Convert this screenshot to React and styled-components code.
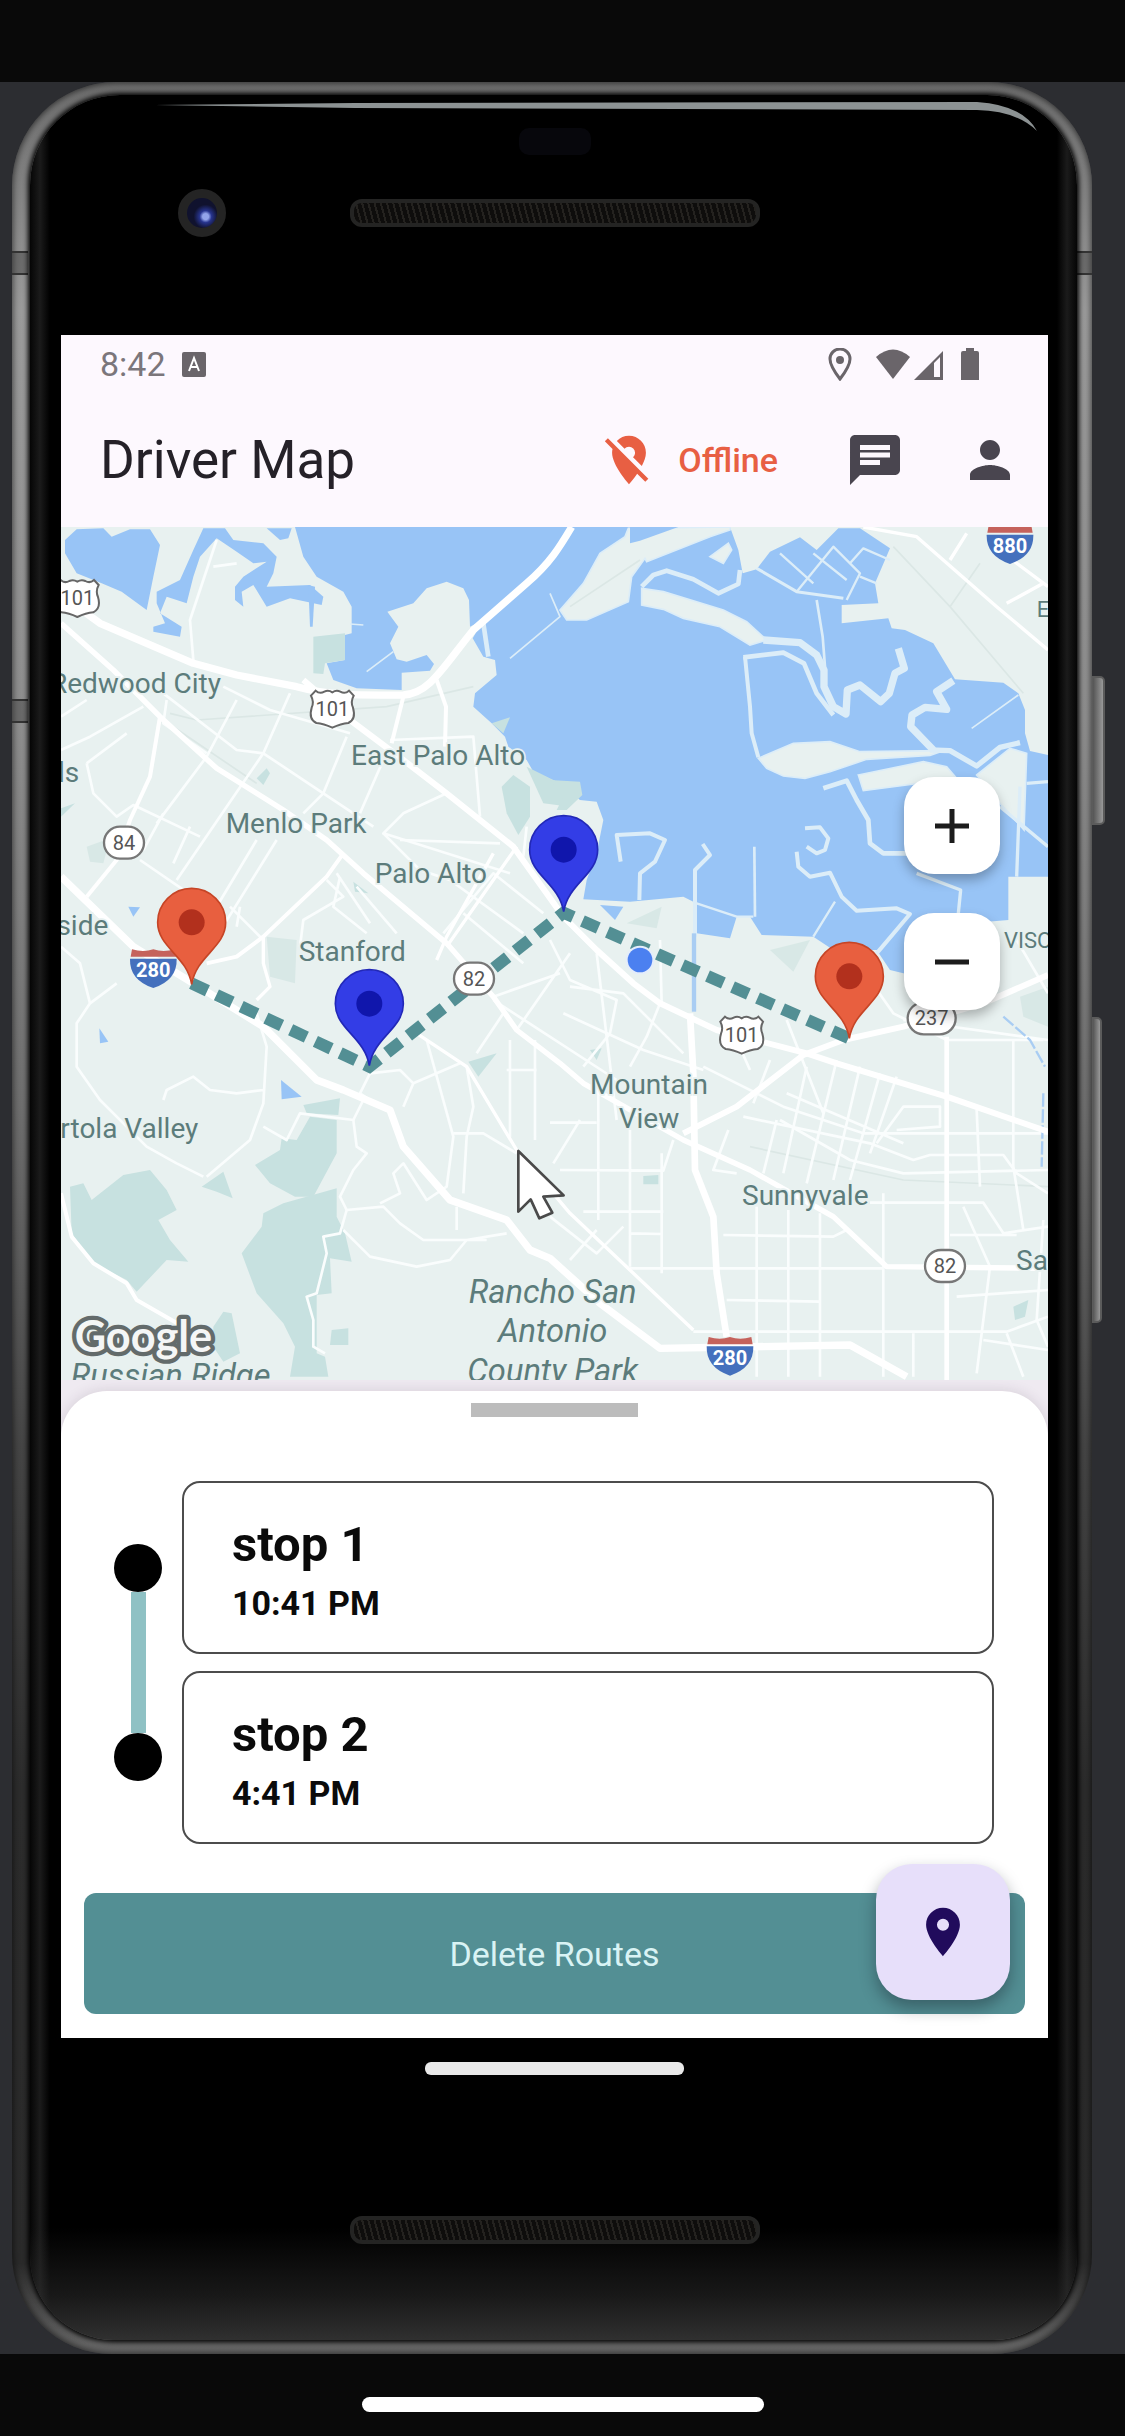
import React from "react";
import styled, { createGlobalStyle } from "styled-components";
import { MdChat, MdLocationOff, MdLocationOn, MdPerson } from "react-icons/md";

const color = {
  letterbox: "#090909",
  desk: "#2c2d31",
  surface: "#fdf8fe",
  ink: "#252128",
  muted: "#6a656a",
  icon: "#49454f",
  offline: "#e85f43",
  teal: "#538f94",
  tealLight: "#8fc1c4",
  water: "#98c4f6",
  land: "#e8f1f0",
  marsh: "#dcedf8",
  park: "#c7e1e0",
  parkLight: "#d8e8e6",
  label: "#5c7c7b",
};

const GlobalStyle = createGlobalStyle`
  *, *::before, *::after { box-sizing: border-box; }
  body {
    margin: 0;
    background: ${color.letterbox};
    font-family: Roboto, "Liberation Sans", sans-serif;
  }
  button { font: inherit; border: 0; padding: 0; cursor: pointer; }
`;

const Page = styled.div`
  min-height: 100vh;
  display: grid;
  grid-template-rows: 82px 1fr 82px;
`;

const Desk = styled.div`
  grid-row: 2;
  background: ${color.desk};
  padding: 0 33px 0 12px;
`;

const HomeBar = styled.footer`
  grid-row: 3;
  display: flex;
  justify-content: center;
  align-items: center;
  padding-top: 18px;

  span {
    width: 402px;
    height: 15px;
    border-radius: 8px;
    background: #fff;
  }
`;

const PhoneFrame = styled.div`
  position: relative;
  display: flex;
  padding: 13px 15px 14px 18px;
  border-radius: 104px 104px 100px 100px;
  background: linear-gradient(#6d6d6d, #9b9b9b 10%, #8e8e8e 28%, #6e6e6e 45%, #454545 60%, #2c2c2c 75%, #2a2a2a 96%, #6a6a6a);
  box-shadow: inset 0 0 6px 1px rgba(0, 0, 0, 0.6);
`;

const SideKey = styled.span`
  position: absolute;
  left: 100%;
  top: ${(p) => p.$top}px;
  width: ${(p) => p.$width}px;
  height: ${(p) => p.$height}px;
  border: 2px solid #5b5b5b;
  border-left-width: 1px;
  border-radius: 0 5px 5px 0;
  background: linear-gradient(90deg, #555, #999);
`;

const Seam = styled.span`
  position: absolute;
  ${(p) => p.$side}: 0;
  top: ${(p) => p.$top}px;
  width: 16px;
  height: 24px;
  border: solid #333;
  border-width: 2px 0;
  background: rgba(50, 50, 50, 0.4);
`;

const Glass = styled.div`
  position: relative;
  flex: 1;
  min-width: 0;
  display: flex;
  flex-direction: column;
  padding: 0 29px 0 31px;
  border-radius: 90px 90px 84px 84px;
  background:
    linear-gradient(transparent 95%, rgba(48, 48, 48, 0.5) 98%, #303030),
    linear-gradient(90deg, #050505, #1b1b1b 10px, #000 20px, #000 calc(100% - 20px), #1b1b1b calc(100% - 10px), #050505);
  box-shadow: 0 0 5px 2px #000;
`;

const Shine = styled.svg`
  position: absolute;
  top: 4px;
  right: 38px;
  width: 884px;
  height: 34px;
`;

const Forehead = styled.div`
  height: 240px;
  display: grid;
  grid-template-columns: 1fr auto 1fr;
  grid-template-rows: 27px 48px;
  row-gap: 34px;
  padding-top: 33px;
  align-content: start;
  align-items: center;
`;

const Sensor = styled.span`
  grid-column: 2;
  justify-self: center;
  width: 72px;
  height: 27px;
  border-radius: 10px;
  background: #07070c;
`;

const Camera = styled.span`
  grid-row: 2;
  grid-column: 1;
  justify-self: start;
  margin-left: 117px;
  width: 48px;
  height: 48px;
  border: 9px solid #242424;
  border-radius: 50%;
  background: radial-gradient(circle at 62% 62%, #93a4ea 0 3px, #27348e 6px, #10122e 12px);
`;

const Grille = styled.span`
  grid-row: 2;
  grid-column: 2;
  display: block;
  width: 410px;
  height: 28px;
  border: 4px solid #242423;
  border-radius: 12px;
  background: repeating-linear-gradient(75deg, #24221f 0 2px, #0e0d0c 2px 6px);
`;

const Chin = styled.div`
  height: 302px;
  display: flex;
  flex-direction: column;
  align-items: center;
  padding-top: 24px;
  gap: 141px;
`;

const NavHandle = styled.span`
  width: 259px;
  height: 13px;
  border-radius: 6px;
  background: #e9e9e9;
`;

const Screen = styled.main`
  position: relative;
  flex: 1;
  display: flex;
  flex-direction: column;
  background: ${color.surface};
  overflow: hidden;
`;

const StatusBar = styled.div`
  height: 58px;
  display: flex;
  align-items: center;
  gap: 16px;
  padding: 0 68px 0 39px;
  color: ${color.muted};
`;

const Clock = styled.time`
  font-size: 34px;
  line-height: 40px;
  color: #7b767b;
`;

const StatusIcons = styled.div`
  display: flex;
  margin-left: auto;

  svg { display: block; }
`;

const AppBar = styled.header`
  height: 134px;
  display: flex;
  align-items: center;
  gap: 55px;
  padding: 0 28px 0 39px;
`;

const Title = styled.h1`
  flex: 1;
  margin: 0;
  font-size: 53px;
  line-height: 60px;
  font-weight: 400;
  color: ${color.ink};
`;

const BarButton = styled.button`
  display: flex;
  align-items: center;
  gap: 20px;
  background: none;
  color: ${(p) => (p.$alert ? color.offline : color.icon)};
  font-size: 34px;
  line-height: 40px;
  font-weight: 500;
  padding-right: ${(p) => (p.$alert ? 12 : 0)}px;
`;

const MapPane = styled.section`
  position: relative;
  height: 853px;

  > svg {
    display: block;
    width: 100%;
    height: 100%;
  }
`;

const ZoomControls = styled.div`
  position: absolute;
  top: 250px;
  right: 48px;
  display: flex;
  flex-direction: column;
  gap: 39px;
`;

const ZoomButton = styled.button`
  display: grid;
  place-items: center;
  width: 96px;
  height: 97px;
  border-radius: 30px;
  background: #fff;
  box-shadow: 0 6px 12px rgba(0, 0, 0, 0.28);
`;

const SheetArea = styled.section`
  flex: 1;
  padding-top: 11px;
  background: #efeaf1;
`;

const Sheet = styled.div`
  display: flex;
  flex-direction: column;
  height: 100%;
  padding: 12px 23px 24px;
  border-radius: 46px 46px 0 0;
  background: #fff;
  box-shadow: 0 0 14px rgba(60, 40, 70, 0.15);
`;

const DragHandle = styled.span`
  align-self: center;
  width: 167px;
  height: 14px;
  background: #bcbcbc;
`;

const Route = styled.div`
  display: flex;
  gap: 20px;
  padding: 64px 31px 49px 30px;
`;

const Rail = styled.div`
  display: flex;
  flex-direction: column;
  align-items: center;
  width: 48px;
  padding: 63px 0;
`;

const Dot = styled.span`
  width: 48px;
  height: 48px;
  border-radius: 50%;
  background: #000;
`;

const Connector = styled.span`
  flex: 1;
  width: 15px;
  background: ${color.tealLight};
`;

const StopList = styled.ol`
  flex: 1;
  display: grid;
  gap: 17px;
  margin: 0;
  padding: 0;
  list-style: none;
`;

const StopCard = styled.li`
  height: 173px;
  padding: 33px 48px;
  border: 2px solid #4c4c4c;
  border-radius: 18px;
  color: #0b0b0b;
  font-weight: 700;
`;

const StopName = styled.h2`
  margin: 0;
  font-size: 49px;
  line-height: 58px;
`;

const StopTime = styled.p`
  margin: 0;
  padding-top: 9px;
  font-size: 34px;
  line-height: 40px;
`;

const DeleteButton = styled.button`
  height: 121px;
  border-radius: 12px;
  background: ${color.teal};
  color: #d9f3f4;
  font-size: 34px;
`;

const LocateButton = styled.button`
  position: absolute;
  right: 38px;
  bottom: 38px;
  display: grid;
  place-items: center;
  width: 134px;
  height: 136px;
  border-radius: 36px;
  background: #e7dffa;
  color: #210b5c;
  box-shadow: 0 8px 16px rgba(20, 30, 40, 0.4);
`;

const MapLabel = styled.text`
  font-family: Roboto, "Liberation Sans", sans-serif;
  font-size: ${(p) => p.$size || 84}px;
  font-style: ${(p) => (p.$italic ? "italic" : "normal")};
  fill: ${color.label};
  stroke: ${color.land};
  stroke-width: 10px;
  paint-order: stroke;
  text-anchor: ${(p) => p.$anchor || "start"};
`;

const ShieldText = styled.text`
  font-family: Roboto, "Liberation Sans", sans-serif;
  font-size: 60px;
  font-weight: ${(p) => (p.$light ? 700 : 400)};
  fill: ${(p) => (p.$light ? "#fff" : "#555")};
  text-anchor: middle;
`;

const Watermark = styled.text`
  font-family: Lato, "Liberation Sans", sans-serif;
  font-size: 130px;
  font-weight: 700;
  fill: #f4f6f6;
  stroke: #636b6b;
  stroke-width: 26px;
  stroke-linejoin: round;
  paint-order: stroke;
`;

const WATER = [
  "M735 21 L760 110 L800 170 L880 215 L905 260 L905 340 L885 345 L885 420 L830 430 L850 480 L920 505 L1055 510 L1055 458 L1140 452 L1152 432 L1130 405 L1070 425 L1040 418 L1020 370 L1045 320 L1012 275 L1090 250 L1130 205 L1190 185 L1240 205 L1257 240 L1260 320 L1300 300 L1268 355 L1300 410 L1335 420 L1340 465 L1275 520 L1270 560 L1325 610 L1365 650 L1375 680 L1430 720 L1450 755 L1530 790 L1590 840 L1640 845 L1660 900 L1640 1000 L1610 1080 L1600 1138 L1740 1145 L1900 1130 L1930 1145 L1940 1240 L2040 1255 L2060 1190 L2100 1190 L2135 1245 L2290 1250 L2350 1290 L2480 1290 L2520 1350 L2560 1360 L2620 1370 L2720 1330 L2760 1210 L2875 1200 L2875 1070 L2994 1070 L2994 705 L2940 693 L2925 640 L2925 570 L2905 520 L2860 488 L2715 478 L2650 370 L2565 330 L2525 325 L2515 295 L2375 310 L2375 255 L2485 250 L2475 190 L2520 85 L2430 25 L2365 25 L2300 90 L2250 52 L2160 95 L2120 148 L2078 160 L2065 90 L2040 21 Z",
  "M45 60 L80 28 L160 25 L185 50 L240 28 L300 28 L330 75 L310 170 L290 270 L215 215 L155 190 L80 160 L45 100 Z",
  "M460 25 L525 25 L550 60 L640 70 L680 110 L670 160 L650 200 L780 195 L820 230 L815 255 L720 235 L650 260 L610 195 L575 215 L580 260 L555 240 L555 200 L580 170 L650 125 L610 130 L560 95 L500 55 L450 110 L430 170 L410 250 L350 230 L330 280 L395 320 L390 350 L310 335 L310 320 L345 310 L320 250 L320 215 L390 180 L430 90 Z",
  "M650 25 L725 25 L715 55 L690 60 Z",
  "M693 1680 L755 1730 L695 1738 Z",
  "M148 1525 L175 1565 L150 1570 Z",
  "M235 1160 L270 1162 L250 1190 Z",
  "M775 195 L795 200 L788 320 L780 320 Z",
  "M793 2085 L820 2098 L798 2115 Z",
];

const ISLANDS = [
  "M1735 25 L1725 50 L1650 100 L1600 190 L1530 270 L1550 300 L1610 300 L1735 245 L1745 170 L1785 115 L1790 125 L1980 50 L2040 30 L2040 21 Z",
  "M1775 205 L1840 215 L2020 270 L2090 305 L2150 360 L2100 375 L2010 320 L1900 295 L1840 268 L1775 255 Z",
  "M2125 715 L2230 670 L2340 665 L2430 695 L2680 692 L2640 706 L2450 718 L2340 755 L2265 775 L2200 768 L2150 745 Z",
  "M2780 765 L2880 685 L2930 700 L2922 930 L2850 850 Z",
  "M2425 765 L2620 725 L2690 740 L2720 775 L2440 812 Z",
  "M1980 110 L2035 70 L2045 90 L2020 130 Z",
];

const MARSH = [
  [14, "M1775 200 L1810 165 L1850 152 L1930 178 L2005 220 L2065 192 L2070 150"],
  [22, "M2140 360 L2250 368 L2300 405 L2322 450 L2322 500 L2350 560 L2388 582 L2392 510 L2430 495 L2492 545 L2518 520 L2535 460 L2563 445 L2545 385"],
  [14, "M2080 412 L2200 398 L2262 430 L2300 520 L2350 585"],
  [12, "M2085 410 L2100 560 L2105 640 L2125 712"],
  [22, "M2650 690 L2582 620 L2586 585 L2625 562 L2690 568 L2660 515 L2710 482"],
  [16, "M2640 690 L2700 692 L2780 738 L2850 682 L2910 668"],
  [14, "M2320 805 L2390 782 L2420 840 L2455 900 L2460 970 L2500 1000 L2570 1000"],
  [12, "M2265 925 L2310 922 L2335 955 L2325 990 L2300 1000 L2270 980"],
  [12, "M2240 995 L2245 1040 L2280 1070 L2340 1058 L2375 1130 L2420 1172 L2540 1165 L2580 1182 L2480 1300"],
  [8, "M2300 240 L2318 350 L2325 440"],
  [12, "M1935 1250 L1935 1050 L1980 1005 L1958 972"],
  [12, "M1768 1140 L1770 1060 L1815 1025 L1845 960 L1800 940 L1700 945 L1712 1025"],
  [8, "M2113 980 L2115 1190"],
  [9, "M2120 145 L2240 215 L2380 235"],
  [7, "M2240 215 L2350 80 L2430 160 L2390 240 M2290 100 L2390 180 M2400 130 L2440 85 L2520 120 M2430 170 L2480 190 M2190 100 L2290 190"],
  [10, "M2900 1070 L2910 800 M2850 860 L2994 980 M2930 790 L2994 785"],
  [10, "M2725 1180 L2732 1110 L2600 1060"],
  [7, "M2290 1250 L2355 1145 M1940 1150 L2060 1190 L2110 1190"],
  [5, "M2765 625 L2905 525 M1380 415 L1530 290 L1500 220 M950 455 L1030 395 M900 312 L940 315"],
  [14, "M1300 310 L1315 410"],
];

const PARKS = [
  "M790 350 L885 340 L885 420 L825 430 L820 462 L790 460 Z",
  "M1390 765 L1440 800 L1440 890 L1405 945 L1370 880 L1355 800 Z",
  "M1430 740 L1530 790 L1560 860 L1480 850 Z",
  "M1500 780 L1590 785 L1597 825 L1550 870 L1520 870 L1540 830 Z",
  "M1325 610 L1380 592 L1360 640 Z",
  "M60 2000 L100 1990 L125 2040 L220 1965 L300 1950 L350 2010 L380 2070 L325 2100 L360 2160 L415 2225 L350 2220 L260 2315 L230 2280 L130 2230 L65 2140 Z",
  "M455 2000 L520 1955 L548 2035 L500 2015 Z",
  "M695 1855 L740 1860 L780 1790 L860 1800 L860 1900 L790 2030 L735 2030 L660 1990 L615 1935 L690 1890 Z",
  "M760 1755 L870 1735 L865 1785 L770 1780 Z",
  "M640 2080 L700 2050 L860 2005 L860 2090 L885 2140 L905 2225 L840 2215 L845 2320 L800 2325 L800 2500 L825 2510 L835 2570 L720 2570 L735 2480 L700 2410 L620 2320 L575 2200 L635 2120 Z",
  "M490 2420 L520 2375 L545 2380 L570 2500 L520 2525 L490 2480 Z",
  "M845 2430 L895 2425 L895 2475 L840 2475 Z",
  "M1255 1625 L1340 1600 L1285 1670 Z",
  "M620 775 L650 745 L660 760 L640 795 Z",
  "M910 1085 L955 1120 L915 1115 Z",
  "M33 865 L75 850 L33 890 Z",
  "M1780 1968 L1825 1965 L1825 1993 L1780 1993 Z",
  "M1620 1590 L1655 1585 L1640 1620 Z",
  "M2890 2360 L2935 2340 L2925 2390 L2895 2400 Z",
];

const LIGHT_PARKS = [
  "M110 980 L180 955 L160 1030 L120 1025 Z",
  "M650 1250 L740 1260 L735 1390 L660 1370 Z",
  "M1730 1210 L1835 1160 L1820 1225 Z",
  "M2160 1290 L2280 1260 L2230 1355 Z",
  "M2910 1430 L2994 1400 L2994 1520 L2920 1490 Z",
  "M300 2065 L330 2060 L325 2090 L300 2095 Z M165 2180 L220 2190 L215 2230 Z M765 1930 L800 1915 L795 1995 Z",
];

const ROADS = [
  [22, "M33 225 L150 310 L430 430 L560 465 L740 500 C850 530 950 525 1060 525 C1140 520 1180 440 1270 330 L1430 190 C1500 130 1530 80 1565 21"],
  [18, "M760 480 L900 600 L1060 720 L1190 820 L1390 980 L1540 1190 L1640 1290 L1750 1390 L1830 1450 L2000 1530 L2270 1600 L2360 1630 L2690 1730 L2994 1835"],
  [16, "M33 310 L190 450 L330 590 L500 745 L700 870 L830 960 L940 1060 L1190 1270 L1330 1430 L1400 1530 L1530 1630 L1600 1690 L1900 1860 L2100 1950 L2350 2090 L2510 2240 L2994 2245"],
  [22, "M33 1070 L250 1280 L430 1390 L640 1520 L800 1680 L880 1710 L1020 1770 L1060 1880 L1200 2040 L1370 2100 L1440 2190 L1500 2215 L1650 2350 L1830 2485 L2400 2475 L2570 2570"],
  [20, "M1920 1480 L1930 1660 L1935 1950 L1990 2090 L2000 2260 L2030 2450"],
  [18, "M1900 1840 L2060 1760 L2260 1605 L2380 1560 L2560 1520 L2800 1450 L2994 1365"],
  [14, "M2690 1550 L2690 2580"],
  [12, "M33 2020 L65 2150 L130 2230 L230 2290 L260 2340 L400 2420"],
  [12, "M330 590 L300 770 L240 900 L200 1020 L110 1130"],
  [12, "M1060 530 L1025 670 M1160 480 L1188 560 L1185 680"],
  [12, "M470 1330 L560 1310 L640 1250 L830 1070 L880 1000"],
  [10, "M1190 1280 L1400 980 M1160 1320 L1190 1250 L1330 1000"],
  [10, "M640 1250 L640 1330 L660 1400 L620 1440"],
  [10, "M1100 1540 L1250 1640 L1400 1890 L1560 2080 L1930 2430"],
  [10, "M2440 21 L2600 50 L2840 260 L2994 390 M2840 85 L2994 200 M2870 250 L2980 190 M2700 120 L2750 40"],
];

const STREETS = [
  "M500 60 L420 300 L430 420 M490 140 L560 130",
  "M33 590 L110 540 M33 690 L120 650 L280 560 M110 730 L230 640 M110 730 L130 820 L200 890 L250 855 L450 950",
  "M350 540 L340 610 L470 700 M340 520 L560 690 L640 700 L820 820 L970 920",
  "M560 540 L470 710 L320 910 M720 520 L640 700 L530 860 L380 1080 M890 650 L820 820 L760 880",
  "M520 500 L660 570 L900 640 M1000 720 L930 880 M1190 820 L1060 880 L1000 940 L1380 1060",
  "M620 960 L440 1260 M680 960 L500 1250 M270 1020 L430 1130 M340 880 L280 990 M420 920 L370 1030",
  "M1020 660 L1270 650 L1290 890 M1050 960 L1350 970 M1000 940 L1110 1050 L1200 1080 L1420 1240",
  "M860 1060 L960 1210 M830 1080 L880 1130 L760 1200 L750 1280 M920 1100 L1040 1240 M870 1070 L850 1160 L950 1240",
  "M540 1160 L640 1260 M570 1160 L560 1220",
  "M33 1280 L90 1330 L120 1450 L80 1510 L80 1640 L150 1740 L290 1880 L380 1930 L460 1970",
  "M120 1450 L200 1390 M470 1970 L600 1860 L640 1750 L650 1580 L620 1480 M340 1740 L350 1710 L430 1670 L480 1710 L560 1720 L640 1710",
  "M640 1820 L710 1860 L750 1780 L910 1800 L920 1880 L950 1900 L910 1950 L870 2030 L890 2070 L870 2140 L820 2150 L830 2200 L800 2320 L770 2330 L790 2400 L790 2480 L825 2500",
  "M880 2130 L960 2210 L1100 2240 L1200 2220 L1250 2160 L1370 2140 M890 2070 L1000 2060 L1050 2110 L1120 2160 L1310 2160 M990 2050 L1050 2020 L1030 1960 L1060 1930 L1130 2040 L1190 2000 L1210 1850 L1130 1560",
  "M960 1740 L930 1720 L960 1660 L1050 1650 L1090 1690 L1230 1630 M910 1800 L940 1740 M1060 1760 L1090 1690 M1240 2020 L1250 1850 L1270 1760 L1250 1640",
  "M1210 1840 L1300 1840 L1400 1900 M1380 1560 L1380 1850 M1455 1560 L1455 1860 M1370 1650 L1460 1650 M1220 2060 L1220 2130",
  "M1330 1430 L1530 1360 M1280 1600 L1360 1480 M1400 1530 L1560 1300 M1640 1300 L1700 1800 M1330 1440 L1700 1680",
  "M1500 1260 L1560 1380 L1700 1440 L1680 1540 L1600 1640 M1560 1400 L1720 1420 L1900 1600 M1540 1480 L1780 1590 L1960 1650 M1830 1450 L1790 1550 L1740 1640 M1830 1260 L1835 1450",
  "M1645 1720 L1645 2100 M1740 1830 L1740 2240 M1835 1900 L1835 2260 M1500 1808 L1640 1808 M1530 1950 L1840 1952 L1870 1860 M1590 1800 L1510 1930 M1600 2075 L1840 2075 M1740 2140 L1835 2142",
  "M2035 1830 L1990 1950 L2060 1960 M2100 1650 L2060 1560 M2120 2060 L2120 2570 M2215 2070 L2215 2570 M2310 2080 L2310 2570 M2500 2020 L2500 2570",
  "M1740 2245 L2500 2245 M2020 2145 L2350 2150 L2390 2130 M2030 2340 L2310 2345 M1930 2435 L2870 2435 L2994 2390",
  "M2270 1640 L2200 1960 M2360 1620 L2270 1990 M2430 1640 L2350 1980 M2490 1660 L2400 1980 M2540 1670 L2460 1900 M2180 1800 L2140 1960 M2080 1790 L2460 1870 L2590 1920 L2640 1905 L2860 1905 L2900 1960 L2994 2020",
  "M1960 1640 L2200 1760 L2440 1840 L2994 1840 M2110 1750 L2160 1620 M2190 1800 L2400 1920 L2560 1960 L2994 1950 M2480 1870 L2560 1760 L2670 1760 L2670 1820 L2540 1830 M2210 1720 L2560 1870",
  "M2210 1500 L2320 1780 M2460 1380 L2530 1480 L2690 1560 L2980 1560 M2890 1560 L2890 1940 L2920 2130 M2780 1770 L2790 2000 M2460 2048 L2800 2048 L2860 2140 L2994 2120 M2740 2060 L2820 2240 L2780 2560 M2700 2145 L2900 2145",
  "M2900 1260 L2994 1420 M2870 2440 L2920 2570 M2590 2440 L2590 2570 M2720 2330 L2994 2310 M2800 2460 L2994 2490 M2980 2100 L2960 2400 L2994 2480 M2560 1500 L2994 1560",
  "M1500 2090 L1640 2200 L1720 2120 M1560 2220 L1640 2130",
  "M1430 920 L1420 1010 M1180 1240 L1330 1060 L1480 1180 M1240 1180 L1420 1330",
];

const STREAMS = "M2860 1490 L2940 1560 L2985 1640 M2980 1720 L2975 1940";

const LABELS = [
  { text: "Redwood City", x: 513, y: 520, anchor: "end" },
  { text: "ls", x: 88, y: 785, anchor: "end" },
  { text: "East Palo Alto", x: 903, y: 735 },
  { text: "Menlo Park", x: 527, y: 940 },
  { text: "Palo Alto", x: 974, y: 1088 },
  { text: "side", x: 175, y: 1245, anchor: "end" },
  { text: "Stanford", x: 746, y: 1322 },
  { text: "rtola Valley", x: 445, y: 1855, anchor: "end" },
  { text: "Mountain", x: 1797, y: 1722, anchor: "middle" },
  { text: "View", x: 1797, y: 1825, anchor: "middle" },
  { text: "Sunnyvale", x: 2076, y: 2055 },
  { text: "Sa", x: 2898, y: 2250 },
  { text: "E", x: 2960, y: 292, size: 66 },
  { text: "VISO", x: 2862, y: 1285, size: 66 },
  { text: "Rancho San", x: 1508, y: 2350, anchor: "middle", size: 98, italic: true },
  { text: "Antonio", x: 1508, y: 2467, anchor: "middle", size: 98, italic: true },
  { text: "County Park", x: 1508, y: 2586, anchor: "middle", size: 98, italic: true },
  { text: "Russian Ridge", x: 62, y: 2600, size: 98, italic: true },
];

const PINS = [
  { x: 425, y: 1393, fill: "#e85f3f", edge: "#c64526", core: "#b2301d" },
  { x: 958, y: 1637, fill: "#333de6", edge: "#2228b8", core: "#1016ac" },
  { x: 1541, y: 1175, fill: "#333de6", edge: "#2228b8", core: "#1016ac" },
  { x: 2398, y: 1555, fill: "#e85f3f", edge: "#c64526", core: "#b2301d" },
];

const SHIELDS = [
  { kind: "us", no: "101", x: 82, y: 235 },
  { kind: "us", no: "101", x: 847, y: 567 },
  { kind: "us", no: "101", x: 2075, y: 1545 },
  { kind: "state", no: "84", x: 222, y: 968 },
  { kind: "state", no: "82", x: 1272, y: 1376 },
  { kind: "state", no: "82", x: 2685, y: 2238 },
  { kind: "state", no: "237", x: 2645, y: 1495, wide: true },
  { kind: "interstate", no: "280", x: 310, y: 1342 },
  { kind: "interstate", no: "280", x: 2040, y: 2505 },
  { kind: "interstate", no: "880", x: 2880, y: 70 },
];

function Shield({ kind, no, x, y, wide }) {
  const half = wide ? 72 : 60;
  return (
    <g transform={`translate(${x} ${y})`}>
      {kind === "us" && (
        <path
          d="M-50 -55 Q-38 -44 -24 -52 Q-12 -58 0 -50 Q12 -58 24 -52 Q38 -44 50 -55 L64 -40 Q54 -22 62 -4 Q72 30 48 42 Q26 44 0 56 Q-26 44 -48 42 Q-72 30 -62 -4 Q-54 -22 -64 -40 Z"
          fill="#fff" stroke="#666" strokeWidth="6"
        />
      )}
      {kind === "state" && (
        <rect x={-half} y="-48" width={half * 2} height="96" rx="48" fill="#fff" stroke="#777" strokeWidth="7" />
      )}
      {kind === "interstate" && (
        <>
          <path d="M-64 -54 Q-30 -44 0 -54 Q30 -44 64 -54 L68 -32 H-68 Z" fill="#c5625c" />
          <path d="M-70 -26 H70 Q72 38 0 62 Q-72 38 -70 -26 Z" fill="#4470bd" />
        </>
      )}
      <ShieldText y={kind === "interstate" ? 30 : 21} $light={kind === "interstate"}>{no}</ShieldText>
    </g>
  );
}

function AreaMap() {
  return (
    <svg viewBox="33 21 2961 2559" preserveAspectRatio="xMidYMid slice" role="img" aria-label="Route map">
      <rect x="-1000" y="-1000" width="5000" height="5000" fill={color.land} />
      {WATER.map((d) => <path key={d} d={d} fill={color.water} />)}
      {ISLANDS.map((d) => <path key={d} d={d} fill={color.land} stroke={color.marsh} strokeWidth="5" />)}
      <g fill="none" stroke={color.marsh} strokeLinejoin="round">
        {MARSH.map(([w, d]) => <path key={d} d={d} strokeWidth={w} />)}
      </g>
      <path d="M1740 21 L1885 21 L1770 62 L1740 70 Z" fill={color.water} />
      <path d="M1650 1155 L1720 1160 L1695 1200 Z" fill={color.water} />
      {LIGHT_PARKS.map((d) => <path key={d} d={d} fill={color.parkLight} />)}
      {PARKS.map((d) => <path key={d} d={d} fill={color.park} />)}
      <g fill="none" stroke="#dbe7e5" strokeWidth="5">
        <path d="M360 580 L440 600 L1010 560 L1270 500 M340 600 L620 790 M1560 260 L1770 120 M2530 80 L2700 260 L2920 520 M2790 130 L2700 260 M2100 1880 L2560 1980 L2994 2000" />
      </g>
      <g fill="none" stroke="#fafdfd" strokeWidth="8" strokeLinejoin="round">
        {STREETS.map((d) => <path key={d} d={d} />)}
      </g>
      <path d="M1932 1240 V1475" fill="none" stroke="#a9cdf3" strokeWidth="13" />
      <path d={STREAMS} fill="none" stroke="#a9cdf3" strokeWidth="7" strokeDasharray="40 8" />
      <g fill="none" stroke="#fff" strokeLinejoin="round">
        {ROADS.map(([w, d]) => <path key={d} d={d} strokeWidth={w} />)}
      </g>
      {LABELS.map((l) => (
        <MapLabel key={l.text} x={l.x} y={l.y} $size={l.size} $anchor={l.anchor} $italic={l.italic}>
          {l.text}
        </MapLabel>
      ))}
      <path
        d="M425 1390 L958 1640 L1541 1178 L2398 1555"
        fill="none" stroke={color.teal} strokeWidth="36" strokeDasharray="52 30"
      />
      {SHIELDS.map((s) => <Shield key={`${s.x}-${s.y}`} {...s} />)}
      <circle cx="1770" cy="1320" r="43" fill="#e4edfb" />
      <circle cx="1770" cy="1320" r="37" fill="#4b80f0" />
      {PINS.map((p) => (
        <g key={p.x} transform={`translate(${p.x} ${p.y})`}>
          <path
            d="M0 0 C-14 -86 -102 -110 -102 -186 A102 102 0 0 1 102 -186 C102 -110 14 -86 0 0 Z"
            fill={p.fill} stroke={p.edge} strokeWidth="5"
          />
          <circle cy="-186" r="39" fill={p.core} />
        </g>
      ))}
      <Watermark x="74" y="2495">Google</Watermark>
      <path
        d="M1405 1893 L1405 2075 L1442 2038 L1468 2095 L1507 2078 L1480 2030 L1541 2026 Z"
        fill="#fff" stroke="#4a4a4a" strokeWidth="8" strokeLinejoin="round"
      />
    </svg>
  );
}

const STOPS = [
  { name: "stop 1", time: "10:41 PM" },
  { name: "stop 2", time: "4:41 PM" },
];

export default function App() {
  return (
    <Page>
      <GlobalStyle />
      <Desk>
        <PhoneFrame>
          <SideKey $top={594} $width={13} $height={149} />
          <SideKey $top={935} $width={10} $height={306} />
          <Seam $side="left" $top={169} />
          <Seam $side="right" $top={169} />
          <Seam $side="left" $top={617} />
          <Glass>
            <Shine viewBox="0 0 884 34" aria-hidden="true">
              <path d="M0 6 L200 4 L822 3 Q868 6 882 32 Q862 12 822 11 L200 9 Z" fill="#8c9293" />
            </Shine>
            <Forehead>
              <Sensor />
              <Camera />
              <Grille />
            </Forehead>
            <Screen>
              <StatusBar>
                <Clock>8:42</Clock>
                <svg width="24" height="25" viewBox="0 0 24 25" aria-hidden="true">
                  <rect width="24" height="25" rx="2" fill={color.muted} />
                  <path d="M7 19 L12 6 L17 19 M9 15 H15" fill="none" stroke="#fff" strokeWidth="2" />
                </svg>
                <StatusIcons>
                  <svg width="152" height="33" viewBox="0 0 152 33" aria-hidden="true">
                    <path d="M12 31 Q2 18 2 11 A10 10 0 0 1 22 11 Q22 18 12 31 Z" fill="none" stroke="currentColor" strokeWidth="3" />
                    <circle cx="12" cy="12" r="4" fill="currentColor" />
                    <path d="M48 9 Q65 -6 82 9 L65 31 Z" fill="currentColor" />
                    <path d="M86 32 L115 3 V32 Z M106 15 V29 H112 V9 Z" fill="currentColor" fillRule="evenodd" />
                    <path d="M133 5 Q133 3 135 3 H138 V0 H146 V3 H149 Q151 3 151 5 V32 H133 Z" fill="currentColor" />
                  </svg>
                </StatusIcons>
              </StatusBar>
              <AppBar>
                <Title>Driver Map</Title>
                <BarButton $alert type="button">
                  <MdLocationOff size={58} />
                  Offline
                </BarButton>
                <BarButton type="button" aria-label="Messages"><MdChat size={60} /></BarButton>
                <BarButton type="button" aria-label="Profile"><MdPerson size={60} /></BarButton>
              </AppBar>
              <MapPane>
                <AreaMap />
                <ZoomControls>
                  <ZoomButton type="button" aria-label="Zoom in">
                    <svg width="34" height="34" viewBox="0 0 34 34">
                      <path d="M17 0 V34 M0 17 H34" stroke="#1c1c1c" strokeWidth="5" />
                    </svg>
                  </ZoomButton>
                  <ZoomButton type="button" aria-label="Zoom out">
                    <svg width="34" height="34" viewBox="0 0 34 34">
                      <path d="M0 17 H34" stroke="#1c1c1c" strokeWidth="5" />
                    </svg>
                  </ZoomButton>
                </ZoomControls>
              </MapPane>
              <SheetArea>
                <Sheet>
                  <DragHandle />
                  <Route>
                    <Rail>
                      <Dot />
                      <Connector />
                      <Dot />
                    </Rail>
                    <StopList>
                      {STOPS.map((stop) => (
                        <StopCard key={stop.name}>
                          <StopName>{stop.name}</StopName>
                          <StopTime>{stop.time}</StopTime>
                        </StopCard>
                      ))}
                    </StopList>
                  </Route>
                  <DeleteButton type="button">Delete Routes</DeleteButton>
                </Sheet>
              </SheetArea>
              <LocateButton type="button" aria-label="Show my location"><MdLocationOn size={58} /></LocateButton>
            </Screen>
            <Chin>
              <NavHandle />
              <Grille />
            </Chin>
          </Glass>
        </PhoneFrame>
      </Desk>
      <HomeBar><span /></HomeBar>
    </Page>
  );
}
